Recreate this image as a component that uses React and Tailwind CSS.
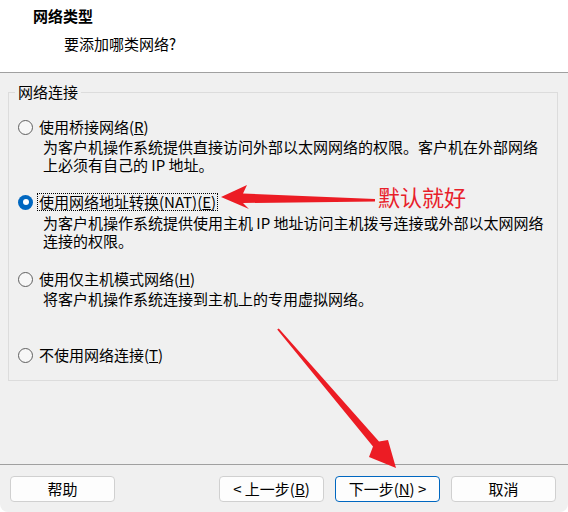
function Radio({ checked }) {
  if (checked) {
    return (
      <span className="flex h-[15px] w-[15px] shrink-0 items-center justify-center rounded-full bg-[#0067c0]">
        <span className="h-[6px] w-[6px] rounded-full bg-white" />
      </span>
    );
  }
  return (
    <span className="h-[15px] w-[15px] shrink-0 rounded-full border border-[#5f5f5f] bg-[#f7f7f7]" />
  );
}

function Option({ checked, focused, children }) {
  return (
    <div className="flex h-[20px] items-center gap-[4px] pl-[9px]">
      <Radio checked={checked} />
      <span
        className={
          focused
            ? "border border-dotted border-black px-[1px] leading-[16px]"
            : "border border-transparent px-[1px] leading-[16px]"
        }
      >
        {children}
      </span>
    </div>
  );
}

function Btn({ primary, children }) {
  return (
    <button
      className={
        primary
          ? "h-[26px] w-[105px] rounded-[4px] border border-[#0067c0] bg-[#fdfdfd] text-[15px] leading-[20px]"
          : "h-[26px] w-[105px] rounded-[4px] border border-[#d0d0d0] bg-[#fdfdfd] text-[15px] leading-[20px]"
      }
    >
      {children}
    </button>
  );
}

export default function App() {
  return (
    <div className="h-[512px] w-[568px] bg-white font-['Noto_Sans_CJK_SC',sans-serif] text-[15px] text-black">
      <div className="relative flex h-[512px] w-[568px] flex-col overflow-hidden rounded-b-[8px] bg-[#f0f0f0]">
        {/* header */}
        <div className="h-[73px] border-b border-[#a0a0a0] bg-white">
          <div className="pl-[33px] pt-[6px] font-bold leading-[20px]">网络类型</div>
          <div className="pl-[64px] pt-[8px] leading-[20px]">要添加哪类网络?</div>
        </div>

        {/* body */}
        <div className="flex-1 pt-[9px]">
          <fieldset className="ml-[8px] h-[299px] w-[550px] border border-[#dcdcdc]">
            <legend className="ml-[6px] px-[3px] leading-[20px]">网络连接</legend>

            <div className="mt-[15px]">
              <Option>
                使用桥接网络(<span className="underline">R</span>)
              </Option>
              <div className="mt-[1px] pl-[34px] leading-[18px]">
                为客户机操作系统提供直接访问外部以太网网络的权限。客户机在外部网络
                <br />
                上必须有自己的 IP 地址。
              </div>
            </div>

            <div className="mt-[18px]">
              <Option checked focused>
                使用网络地址转换(NAT)(<span className="underline">E</span>)
              </Option>
              <div className="mt-[2px] pl-[34px] leading-[18px]">
                为客户机操作系统提供使用主机 IP 地址访问主机拨号连接或外部以太网网络
                <br />
                连接的权限。
              </div>
            </div>

            <div className="mt-[19px]">
              <Option>
                使用仅主机模式网络(<span className="underline">H</span>)
              </Option>
              <div className="mt-[1px] pl-[34px] leading-[18px]">
                将客户机操作系统连接到主机上的专用虚拟网络。
              </div>
            </div>

            <div className="mt-[37px]">
              <Option>
                不使用网络连接(<span className="underline">T</span>)
              </Option>
            </div>
          </fieldset>
        </div>

        {/* footer */}
        <div className="flex h-[48px] items-start justify-between border-t border-[#a0a0a0] pl-[10px] pr-[12px] pt-[11px]">
          <Btn>帮助</Btn>
          <div className="flex gap-[11px]">
            <Btn>
              &lt; 上一步(<span className="underline">B</span>)
            </Btn>
            <Btn primary>
              下一步(<span className="underline">N</span>) &gt;
            </Btn>
            <Btn>取消</Btn>
          </div>
        </div>

        {/* annotations */}
        <svg className="pointer-events-none absolute left-0 top-0" width="568" height="512">
          <polygon
            fill="#ec1c24"
            points="221,197 247,185 243,193.5 375,199 375,201.5 243,203 249,209"
          />
          <polygon
            fill="#ec1c24"
            points="278.8,328.4 379,441.4 388,440 396,468 369,457 373,446.6 277.2,329.6"
          />
        </svg>
        <div className="absolute left-[378px] top-[182px] text-[22px] leading-[28px] text-[#e8202a]">
          默认就好
        </div>
      </div>
    </div>
  );
}
